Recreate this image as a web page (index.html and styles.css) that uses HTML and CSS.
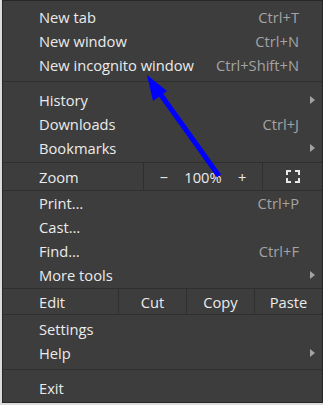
FILE: index.html
```html
<!DOCTYPE html>
<html>
<head>
    <meta charset="utf-8">
    <title>Menu</title>
    <link rel="stylesheet" href="styles.css">
</head>
<body>
    <div class="menu">
        <div class="item"><span class="label">New tab</span><span class="accel">Ctrl+T</span></div>
        <div class="item"><span class="label">New window</span><span class="accel">Ctrl+N</span></div>
        <div class="item"><span class="label">New incognito window</span><span class="accel">Ctrl+Shift+N</span></div>
        <div class="sep"></div>
        <div class="item sub"><span class="label">History</span><span class="arrow"></span></div>
        <div class="item"><span class="label">Downloads</span><span class="accel">Ctrl+J</span></div>
        <div class="item sub"><span class="label">Bookmarks</span><span class="arrow"></span></div>
        <div class="strip zoom">
            <div class="strip-label zoom-label">Zoom</div>
            <div class="zoom-ctrls">
                <span class="cell">&minus;</span>
                <span class="cell">100%</span>
                <span class="cell">+</span>
            </div>
            <div class="cell full">
                <svg width="14" height="13" viewBox="0 0 14 13">
                    <path d="M1 5V1H5M9 1H13V5M13 8V12H9M5 12H1V8" fill="none" stroke="#e8e8e8" stroke-width="2"/>
                </svg>
            </div>
        </div>
        <div class="item"><span class="label">Print…</span><span class="accel">Ctrl+P</span></div>
        <div class="item"><span class="label">Cast…</span></div>
        <div class="item"><span class="label">Find…</span><span class="accel">Ctrl+F</span></div>
        <div class="item sub"><span class="label">More tools</span><span class="arrow"></span></div>
        <div class="strip edit">
            <div class="strip-label edit-label">Edit</div>
            <span class="cell edit-cell">Cut</span>
            <span class="cell edit-cell">Copy</span>
            <span class="cell edit-cell">Paste</span>
        </div>
        <div class="item"><span class="label">Settings</span></div>
        <div class="item sub"><span class="label">Help</span><span class="arrow"></span></div>
        <div class="sep"></div>
        <div class="item"><span class="label">Exit</span></div>

        <!-- annotation drawn over the menu -->
        <svg class="pointer" width="323" height="405" viewBox="0 0 323 405">
            <line x1="219" y1="176" x2="156" y2="88" stroke="#0000ff" stroke-width="5"/>
            <polygon points="147,75 167,91 153,101" fill="#0000ff"/>
        </svg>
    </div>
</body>
</html>
```

FILE: styles.css
```css
html, body {
    margin: 0;
    padding: 0;
}
body {
    background-color: #dcdcdc;
    width: 323px;
    height: 405px;
    overflow: hidden;
}
.menu {
    position: relative;
    box-sizing: border-box;
    width: 321px;
    height: 403px;
    margin-left: 2px;
    padding-top: 4px;
    background-color: #3d3d3d;
    border: 1px solid #272727;
    font-family: "Open Sans", "Noto Sans", sans-serif;
    font-size: 14.7px;
    color: #ebebeb;
}
.item {
    display: flex;
    align-items: center;
    height: 24px;
    padding: 0 23px 0 36px;
}
.label {
    flex: 1;
}
.accel {
    color: #a3a3a3;
}
.arrow {
    width: 0;
    height: 0;
    margin-right: -16px;
    border-top: 4px solid transparent;
    border-bottom: 4px solid transparent;
    border-left: 5px solid #a3a3a3;
}
.sep {
    height: 1px;
    margin: 4px 0 6px 0;
    background-color: #2f2f2f;
}
.strip {
    display: flex;
    border-top: 1px solid #2f2f2f;
    border-bottom: 1px solid #2f2f2f;
}
.strip-label {
    display: flex;
    align-items: center;
    box-sizing: border-box;
    padding-left: 36px;
}
.cell {
    display: flex;
    align-items: center;
    justify-content: center;
}
.zoom {
    height: 27px;
    margin-top: 2px;
}
.zoom-label {
    width: 140px;
}
.zoom-ctrls {
    display: grid;
    grid-template-columns: 1fr 1fr 1fr;
    width: 118px;
    border-left: 1px solid #2f2f2f;
}
.full {
    flex: 1;
    border-left: 1px solid #2f2f2f;
}
.edit {
    height: 25px;
    margin-top: 1px;
    margin-bottom: 2px;
}
.edit-label {
    width: 115px;
}
.edit-cell {
    width: 67px;
    border-left: 1px solid #2f2f2f;
}
.pointer {
    position: absolute;
    left: -3px;
    top: -1px;
}
```
